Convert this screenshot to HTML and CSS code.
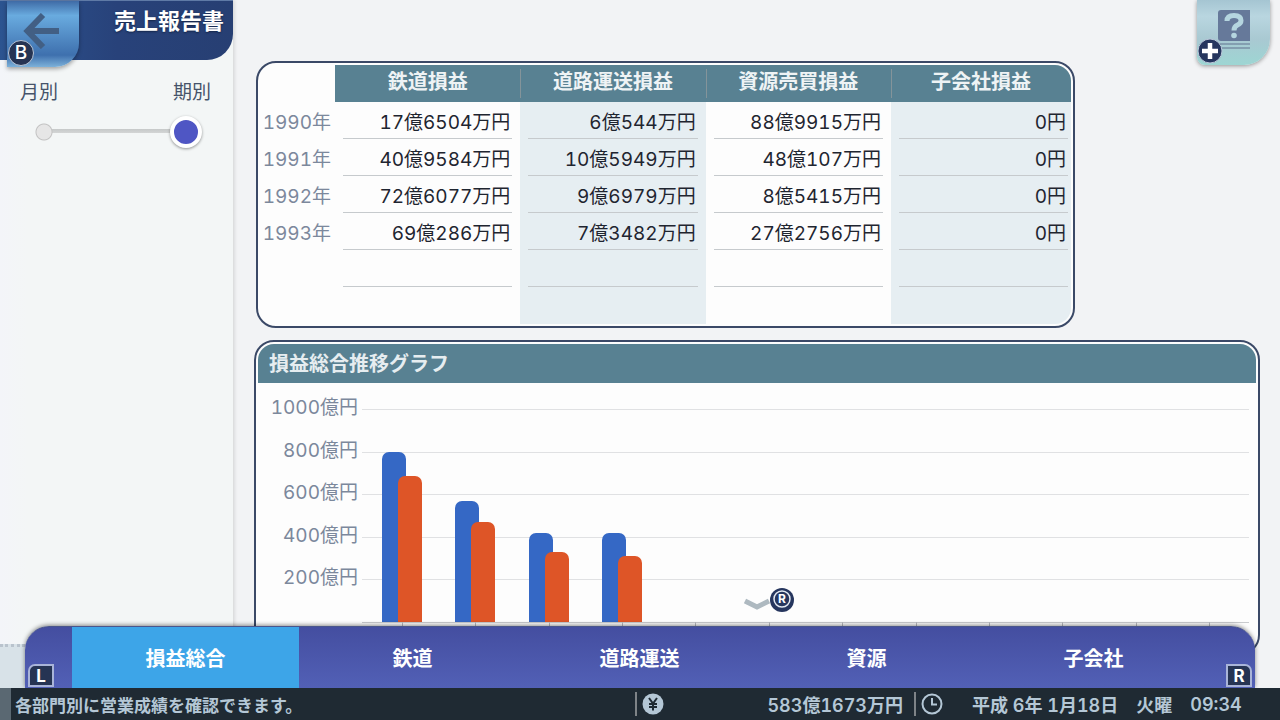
FILE: index.html
```html
<!DOCTYPE html>
<html lang="ja">
<head>
    <meta charset="UTF-8">
    <meta name="viewport" content="width=device-width, initial-scale=1.0">
    <title>売上報告書</title>
    <link rel="stylesheet" href="styles.css">
</head>
<body>
    <div class="screen">
        <!-- サイドバー -->
        <aside class="sidebar">
            <header class="title-bar">
                <button type="button" class="back-btn" aria-label="戻る">
                    <svg class="back-arrow" viewBox="0 0 36 36" width="36" height="36" fill="none" stroke="#425f84" stroke-width="6">
                        <path d="M36 18H5M20 2L4.500 18L20 34"/>
                    </svg>
                </button>
                <span class="key-round back-key">B</span>
                <h1>売上報告書</h1>
            </header>
            <div class="period">
                <div class="period-labels">
                    <label for="period">月別</label>
                    <label for="period">期別</label>
                </div>
                <input type="range" id="period" class="period-slider" min="0" max="1" value="1">
            </div>
            <div class="sidebar-foot"></div>
        </aside>

        <!-- 損益表とグラフ -->
        <main class="content">
            <section class="panel table-panel">
                <table class="profit-table">
                    <thead>
                        <tr>
                            <td class="corner"></td>
                            <th scope="col">鉄道損益</th>
                            <th scope="col">道路運送損益</th>
                            <th scope="col">資源売買損益</th>
                            <th scope="col" class="last">子会社損益</th>
                        </tr>
                    </thead>
                    <tbody>
                        <tr><th scope="row">1990年</th><td>17億6504万円</td><td>6億544万円</td><td>88億9915万円</td><td>0円</td></tr>
                        <tr><th scope="row">1991年</th><td>40億9584万円</td><td>10億5949万円</td><td>48億107万円</td><td>0円</td></tr>
                        <tr><th scope="row">1992年</th><td>72億6077万円</td><td>9億6979万円</td><td>8億5415万円</td><td>0円</td></tr>
                        <tr><th scope="row">1993年</th><td>69億286万円</td><td>7億3482万円</td><td>27億2756万円</td><td>0円</td></tr>
                        <tr><th></th><td></td><td></td><td></td><td></td></tr>
                        <tr><th></th><td></td><td></td><td></td><td></td></tr>
                    </tbody>
                </table>
            </section>

            <section class="panel chart-panel">
                <h2>損益総合推移グラフ</h2>
                <div class="chart">
                    <div class="axis">
                        <span>1000億円</span>
                        <span>800億円</span>
                        <span>600億円</span>
                        <span>400億円</span>
                        <span>200億円</span>
                    </div>
                    <div class="plot">
                        <div class="grid-lines"><i></i><i></i><i></i><i></i><i></i></div>
                        <div class="bars">
                            <div class="group"><div class="bar income" style="height: 80%"></div><div class="bar profit" style="height: 68.5%"></div></div>
                            <div class="group"><div class="bar income" style="height: 57%"></div><div class="bar profit" style="height: 47%"></div></div>
                            <div class="group"><div class="bar income" style="height: 42%"></div><div class="bar profit" style="height: 33%"></div></div>
                            <div class="group"><div class="bar income" style="height: 41.6%"></div><div class="bar profit" style="height: 31.2%"></div></div>
                            <div class="group"></div>
                            <div class="group"></div>
                            <div class="group"></div>
                            <div class="group"></div>
                            <div class="group"></div>
                            <div class="group"></div>
                            <div class="group"></div>
                            <div class="group"></div>
                        </div>
                    </div>
                </div>
            </section>
        </main>

        <!-- ヘルプ -->
        <button type="button" class="help-btn" aria-label="ヘルプ">
            <svg viewBox="0 0 34 40" width="34" height="40">
                <path d="M4 0H33V31H4Q1 31 1 28V3Q1 0 4 0Z" fill="#66799a"/>
                <path d="M3 34H33M5 38H33" stroke="#7890a5" stroke-width="1.5"/>
                <path d="M10 11Q10 5.500 17 5.500Q24 5.500 24 10.500Q24 13.500 20.500 15Q17 16.500 17 20.500" fill="none" stroke="#b5d5df" stroke-width="5"/>
                <circle cx="17" cy="25.500" r="2.800" fill="#b5d5df"/>
            </svg>
        </button>
        <svg class="help-key" viewBox="0 0 26 26" width="26" height="26">
            <circle cx="13" cy="13" r="12" fill="#26365e" stroke="#b9c6d8" stroke-width="1"/>
            <path d="M13 5V21M5 13H21" stroke="#fff" stroke-width="4.500"/>
        </svg>

        <!-- スクロール案内 -->
        <div class="scroll-hint">
            <svg viewBox="0 0 52 26" width="52" height="26">
                <path d="M2 14L14 20L26 14" fill="none" stroke="#aeb9c0" stroke-width="5"/>
                <circle cx="39" cy="13" r="12" fill="#26365e"/>
                <circle cx="39" cy="12" r="8" fill="none" stroke="#e4eaf2" stroke-width="1.500"/>
                <text x="39" y="16" text-anchor="middle" class="hint-letter">R</text>
            </svg>
        </div>

        <!-- 部門タブ -->
        <nav class="tabs">
            <span class="key-square key-left">L</span>
            <button type="button" class="tab active">損益総合</button>
            <button type="button" class="tab">鉄道</button>
            <button type="button" class="tab">道路運送</button>
            <button type="button" class="tab">資源</button>
            <button type="button" class="tab">子会社</button>
            <span class="key-square key-right">R</span>
        </nav>
    </div>

    <!-- ステータスバー -->
    <footer class="status">
        <p class="message">各部門別に営業成績を確認できます。</p>
        <div class="money">
            <svg viewBox="0 0 22 22" width="22" height="22">
                <circle cx="11" cy="11" r="10.500" fill="#b4c7d6"/>
                <path d="M7 5L11 10.500L15 5M11 10.500V17.500M7 11H15M7 14H15" fill="none" stroke="#1f2a33" stroke-width="2"/>
            </svg>
            <span>583億1673万円</span>
        </div>
        <div class="clock">
            <svg viewBox="0 0 22 22" width="22" height="22" fill="none" stroke="#b4c7d6" stroke-width="2">
                <circle cx="11" cy="11" r="9.500"/>
                <path d="M11 5V11.500H16"/>
            </svg>
            <span class="date">平成 6年 1月18日</span>
            <span>火曜</span>
            <span>09:34</span>
        </div>
    </footer>
</body>
</html>
```
FILE: styles.css
```css
* {
    box-sizing: border-box;
}

body {
    margin: 0;
    height: 100vh;
    display: flex;
    flex-direction: column;
    overflow: hidden;
    background-color: #f2f3f5;
    color: #1f2530;
    font-family: Inter, "Noto Sans CJK JP", sans-serif;
    font-size: 19px;
    font-variant-numeric: tabular-nums;
}

button {
    border: none;
    padding: 0;
    font-family: inherit;
    cursor: pointer;
}

h1, h2, p {
    margin: 0;
}

.screen {
    position: relative;
    flex: 1;
    min-height: 0;
    display: flex;
    overflow: hidden;
}

/* サイドバー */
.sidebar {
    width: 233px;
    flex-shrink: 0;
    display: flex;
    flex-direction: column;
    background: linear-gradient(to right, #f3f5f9, #f3f6f6 28px);
    box-shadow: 1px 0 4px rgba(0, 0, 0, 0.15);
}

.title-bar {
    position: relative;
    height: 60px;
    padding: 4px 9px 0 8px;
    display: flex;
    justify-content: flex-end;
    background: linear-gradient(to right, #2c5490, #28427a 50%, #273f73);
    border-top: 1px solid #5f7aa6;
    border-bottom-right-radius: 26px;
}

.title-bar h1 {
    color: #fff;
    font-size: 22px;
    line-height: 32px;
    font-weight: 700;
    text-shadow: 0 1px 2px #142548;
}

.back-btn {
    position: absolute;
    top: 0;
    left: 7px;
    width: 72px;
    height: 66px;
    padding-right: 4px;
    border-bottom-right-radius: 24px;
    background: linear-gradient(#3f6ba6, #69abdf 22%, #3e70ae 82%, #7db1d9);
    box-shadow: 0 2px 4px rgba(0, 0, 0, 0.35);
}

.back-arrow {
    display: block;
    margin: -6px auto 0;
}

.key-round {
    width: 26px;
    height: 26px;
    border: 1px solid #b9c6d8;
    border-radius: 50%;
    background-color: #263453;
    color: #fff;
    font-size: 19px;
    line-height: 24px;
    font-weight: 500;
    text-align: center;
}

.back-key {
    position: absolute;
    top: 39px;
    left: 8px;
}

/* 期間スライダー */
.period {
    padding: 19px 22px 0 20px;
}

.period-labels {
    display: flex;
    justify-content: space-between;
    color: #46536a;
    line-height: 28px;
}

.period-slider {
    -webkit-appearance: none;
    appearance: none;
    display: block;
    width: calc(100% - 24px);
    height: 32px;
    margin: 9px 0 0 15px;
    background:
        radial-gradient(circle at 9px 16px, #e6e6e6 7px, #c2c2c2 8px, transparent 9px),
        linear-gradient(#c6c9c9, #d3d5d5) 16px 13px / calc(100% - 32px) 4px no-repeat;
}

.period-slider::-webkit-slider-thumb {
    -webkit-appearance: none;
    width: 32px;
    height: 32px;
    border: 4px solid #fff;
    border-radius: 50%;
    background-color: #4f56c4;
    box-shadow: 0 1px 3px rgba(0, 0, 0, 0.4);
}

.sidebar-foot {
    width: 25px;
    height: 44px;
    margin-top: auto;
    border-top: 3px dotted #b9c3cd;
    background-color: #d8e2e8;
}

/* パネル共通 */
.content {
    flex: 1;
    min-width: 0;
    padding: 61px 20px 0 21px;
}

.panel {
    border: 2px solid #3b4967;
    border-radius: 20px;
    background-color: #fdfdfd;
}

/* 損益表 */
.table-panel {
    margin: 0 185px 0 2px;
    padding: 2px 2px 2px 0;
}

.profit-table {
    width: 100%;
    table-layout: fixed;
    border-collapse: separate;
    border-spacing: 0;
}

.profit-table td,
.profit-table th {
    height: 37px;
    padding: 0 10px 0 0;
    font-weight: 400;
    text-align: right;
    white-space: nowrap;
}

.profit-table .corner {
    width: 77px;
}

.profit-table .last {
    width: 180px;
}

.profit-table thead th {
    padding: 0 0 3px;
    background:
        linear-gradient(#84949a, #84949a) 0 4px / 1px calc(100% - 8px) no-repeat,
        #588192;
    color: #eef3f5;
    font-size: 20px;
    line-height: 28px;
    font-weight: 700;
    text-align: center;
}

.profit-table thead .corner + th {
    background: #588192;
}

.profit-table thead th.last {
    border-top-right-radius: 16px;
}

.profit-table tbody th {
    padding-right: 4px;
    color: #7c889c;
}

.profit-table tbody td {
    background-image: linear-gradient(#c6cacd, #c6cacd);
    background-position: 8px 100%;
    background-size: calc(100% - 16px) 1px;
    background-repeat: no-repeat;
}

.profit-table tbody td:nth-child(odd) {
    background-color: #e6eef2;
}

.profit-table tbody td:last-child {
    padding-right: 5px;
    background-size: calc(100% - 11px) 1px;
}

.profit-table tbody tr:last-child td {
    background-image: none;
}

.profit-table tbody tr:last-child td:last-child {
    border-bottom-right-radius: 16px;
}

/* 推移グラフ */
.chart-panel {
    margin-top: 12px;
    padding: 2px;
}

.chart-panel h2 {
    height: 39px;
    padding-left: 11px;
    border-radius: 16px 16px 0 0;
    background-color: #588192;
    color: #e6edf0;
    font-size: 20px;
    line-height: 40px;
    font-weight: 700;
}

.chart {
    display: flex;
    gap: 4px;
    padding: 26px 7px 28px 0;
}

.axis,
.grid-lines {
    height: 213px;
    display: grid;
    grid-template-rows: repeat(5, 1fr);
}

.axis {
    width: 100px;
    color: #7c889c;
    text-align: right;
    line-height: 28px;
}

.axis span {
    margin-top: -15px;
}

.plot {
    position: relative;
    flex: 1;
    border-bottom: 1px solid #c9cbce;
}

.grid-lines i {
    border-top: 1px solid #e0e1e3;
}

.bars {
    position: absolute;
    inset: 0 3px;
    display: grid;
    grid-template-columns: repeat(12, 1fr);
}

.group {
    position: relative;
    display: flex;
    justify-content: center;
    align-items: flex-end;
}

.group::after {
    content: "";
    position: absolute;
    top: 100%;
    left: 50%;
    width: 1px;
    height: 6px;
    background-color: #b9bbc0;
}

.bar {
    width: 24px;
    border-radius: 7px 7px 0 0;
}

.bar.income {
    background-color: #3568c5;
}

.bar.profit {
    margin-left: -8px;
    background-color: #de5527;
}

/* ヘルプボタン */
.help-btn {
    position: absolute;
    top: 0;
    right: 10px;
    width: 73px;
    height: 65px;
    border-bottom-right-radius: 26px;
    border-bottom-left-radius: 8px;
    background: linear-gradient(#a5c5d2, #b9d6e0 25%, #a9c9d2 60%, #9dd6d3);
    box-shadow: 0 1px 4px rgba(0, 0, 0, 0.4);
}

.help-btn svg {
    display: block;
    margin: -6px auto 0;
}

.help-key {
    position: absolute;
    top: 38px;
    right: 57px;
}

.scroll-hint {
    position: absolute;
    bottom: 75px;
    left: calc(50% + 103px);
    height: 26px;
}

.hint-letter {
    fill: #fff;
    font-size: 12px;
    font-weight: 700;
}

/* 部門タブ */
.tabs {
    position: absolute;
    left: 25px;
    right: 25px;
    bottom: 0;
    height: 62px;
    padding: 0 48px 0 47px;
    display: flex;
    border-top: 1px solid #4a568c;
    border-radius: 24px 24px 0 0;
    background: linear-gradient(#444ea0, #5260b6);
    box-shadow: 0 -1px 4px rgba(0, 0, 0, 0.45);
}

.tab {
    flex: 1;
    background: none;
    color: #fff;
    font-size: 20px;
    font-weight: 700;
}

.tab.active {
    background-color: #3da5e8;
}

.key-square {
    position: absolute;
    bottom: 1px;
    width: 26px;
    height: 23px;
    border: 2px solid #a9b4d8;
    background-color: #263453;
    color: #fff;
    font-size: 17px;
    line-height: 20px;
    font-weight: 700;
    text-align: center;
}

.key-left {
    left: 3px;
    border-top-left-radius: 7px;
}

.key-right {
    right: 3px;
    border-top-right-radius: 7px;
}

/* ステータスバー */
.status {
    height: 32px;
    display: flex;
    align-items: center;
    border-left: 11px solid #5a6872;
    background-color: #1f2a33;
    color: #b4c7d6;
    font-weight: 500;
}

.message {
    flex: 1;
    padding-left: 4px;
    font-size: 17px;
    font-weight: 700;
}

.money,
.clock {
    height: 24px;
    display: flex;
    align-items: center;
    border-left: 2px solid #7e8387;
}

.money {
    width: 279px;
    padding: 0 11px 0 5px;
    justify-content: space-between;
    font-size: 18px;
    font-weight: 600;
}

.clock {
    width: 366px;
    padding-left: 5px;
    gap: 18px;
    font-size: 18px;
    font-weight: 600;
}

.clock .date {
    margin-left: 11px;
}
```
